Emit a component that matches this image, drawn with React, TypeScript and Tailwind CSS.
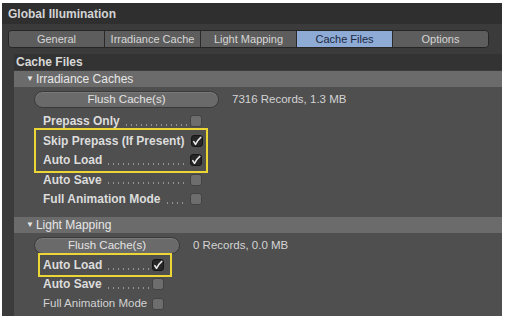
import React from "react";

const FONT = "font-['Liberation_Sans',Arial,sans-serif]";

function Check({ checked }: { checked?: boolean }) {
  if (checked) {
    return (
      <div className="w-[12px] h-[12px] shrink-0 rounded-[3px] bg-[#262626] border border-[#161616] flex items-center justify-center">
        <svg width="10" height="10" viewBox="0 0 10 10">
          <path d="M1.8 5.6 L3.5 8.4 C5 5.6 6.8 3 8.8 1.4" fill="none" stroke="#e8e8e8" strokeWidth="1.6" strokeLinecap="round" strokeLinejoin="round" />
        </svg>
      </div>
    );
  }
  return <div className="w-[12px] h-[12px] shrink-0 rounded-[3px] bg-[#6d6d6d] border border-[#434343]" />;
}

function Row({ label, checked, width, bold = true, dots = true }: { label: string; checked?: boolean; width: number; bold?: boolean; dots?: boolean }) {
  return (
    <div className="h-[19.5px] flex items-center" style={{ width }}>
      <span className={`whitespace-nowrap ${bold ? "font-bold text-[12px] text-[#dcdcdc]" : "text-[11.5px] text-[#d2d2d2]"}`}>{label}</span>
      {dots ? (
        <span className="flex-1 self-end mb-[5px] ml-[4px] mr-[3px] h-[2px] bg-[radial-gradient(circle,#959595_0.8px,transparent_1.1px)] bg-[length:5px_2px] bg-repeat-x" />
      ) : (
        <span className="flex-1" />
      )}
      <Check checked={checked} />
    </div>
  );
}

function SubHeader({ title }: { title: string }) {
  return (
    <div className="h-[16px] bg-[#6b6b6b] flex items-center pl-[12px] text-[12px] text-[#e6e6e6]">
      <span className="text-[8px] mr-[2px] leading-none">▼</span>
      <span>{title}</span>
    </div>
  );
}

function FlushButton({ width }: { width: number }) {
  return (
    <div
      className="h-[17px] rounded-full bg-[#6a6a6a] border border-[#393939] flex items-center justify-center text-[11.5px] text-[#e4e4e4] shadow-[inset_0_1px_0_#7a7a7a]"
      style={{ width }}
    >
      Flush Cache(s)
    </div>
  );
}

export default function App() {
  const tabs = ["General", "Irradiance Cache", "Light Mapping", "Cache Files", "Options"];
  return (
    <div className={`w-[505px] h-[319px] bg-white pt-[3px] pl-[2px] ${FONT}`}>
      <div className="w-[500px] h-[313px] bg-[#3b3b3b] flex flex-col">
        <div className="h-[21px] bg-[#2f2f2f] flex items-center pl-[6px] text-[12px] font-bold text-[#d4d4d4]">
          Global Illumination
        </div>
        <div className="mt-[6px] ml-[6px] w-[481px] h-[18px] flex rounded-[4px] border border-[#262626] overflow-hidden">
          {tabs.map((t, i) => (
            <div
              key={t}
              className={`flex-1 flex items-center justify-center text-[11px] ${
                i > 0 ? "border-l border-[#2a2a2a]" : ""
              } ${t === "Cache Files" ? "bg-[#8eabd6] text-[#1b2840]" : "bg-[#5d5d5d] text-[#d6d6d6]"}`}
            >
              {t}
            </div>
          ))}
        </div>
        <div className="mt-[6px] ml-[12px] flex-1 flex flex-col">
          <div className="h-[16px] bg-[#333333] flex items-center pl-[2px] text-[12px] font-bold text-[#d8d8d8]">
            Cache Files
          </div>
          <div className="h-[1px]" />
          <SubHeader title="Irradiance Caches" />
          <div className="bg-[#4f4f4f] flex flex-col items-start pb-[8px]">
            <div className="mt-[4px] ml-[20px] flex items-center">
              <FlushButton width={185} />
              <span className="ml-[13px] text-[11.5px] text-[#d4d4d4]">7316 Records, 1.3 MB</span>
            </div>
            <div className="ml-[29px] mt-[3px] flex flex-col items-start">
              <Row label="Prepass Only" width={159} />
              <div className="border-2 border-[#ecd636] -ml-[9px] pl-[7px] pr-[4px] -my-[3px] py-[1px]">
                <Row label="Skip Prepass (If Present)" checked width={159} />
                <Row label="Auto Load" checked width={159} />
              </div>
              <Row label="Auto Save" width={159} />
              <Row label="Full Animation Mode" width={159} />
            </div>
          </div>
          <SubHeader title="Light Mapping" />
          <div className="bg-[#4f4f4f] flex-1 flex flex-col items-start">
            <div className="mt-[4px] ml-[20px] flex items-center">
              <FlushButton width={146} />
              <span className="ml-[13px] text-[11.5px] text-[#d4d4d4]">0 Records, 0.0 MB</span>
            </div>
            <div className="ml-[29px] mt-[1px] flex flex-col items-start">
              <div className="border-2 border-[#ecd636] -ml-[5px] pl-[3px] pr-[6px] -my-[2px] py-0">
                <Row label="Auto Load" checked width={121} />
              </div>
              <Row label="Auto Save" width={121} />
              <Row label="Full Animation Mode" width={121} bold={false} dots={false} />
            </div>
          </div>
        </div>
      </div>
    </div>
  );
}
